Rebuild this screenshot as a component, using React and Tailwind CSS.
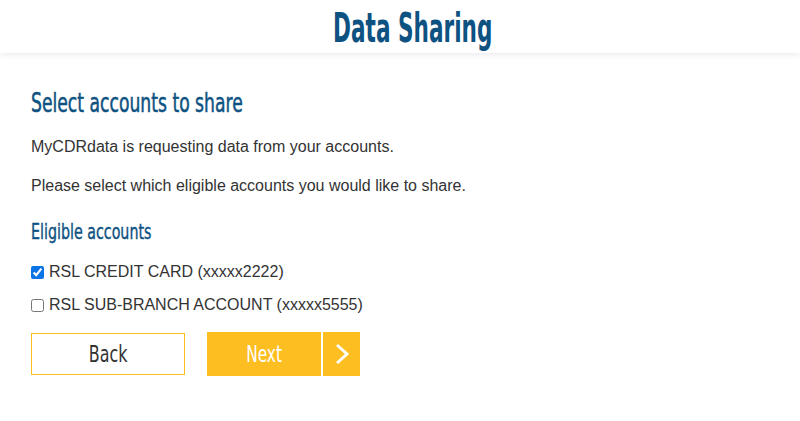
import React, { useState } from 'react';

const ACCOUNTS = [
  { id: 'cc', label: 'RSL CREDIT CARD (xxxxx2222)', checked: true },
  { id: 'sb', label: 'RSL SUB-BRANCH ACCOUNT (xxxxx5555)', checked: false },
];

const condensed = { fontFamily: '"DejaVu Sans Condensed", "Liberation Sans", sans-serif' };

export default function App() {
  const [selected, setSelected] = useState(
    Object.fromEntries(ACCOUNTS.map((a) => [a.id, a.checked]))
  );

  return (
    <div className="min-h-screen bg-white" style={{ fontFamily: '"Liberation Sans", Arial, sans-serif' }}>
      <header className="h-[53px] bg-white shadow-[0_2px_6px_rgba(0,0,0,0.08)] flex items-end justify-center pb-[5px]">
        <h1 className="ml-[26px] text-[40px] leading-none font-bold text-[#0e5282] scale-x-[0.6] whitespace-nowrap" style={condensed}>
          Data Sharing
        </h1>
      </header>

      <main className="px-[31px] pt-[35px]">
        <h2 className="text-[26px] leading-[30px] text-[#0e5282] origin-left scale-x-[0.735] whitespace-nowrap [-webkit-text-stroke:0.5px_#0e5282]" style={condensed}>
          Select accounts to share
        </h2>
        <p className="mt-[20px] text-[16px] leading-[18px] text-[#333]">MyCDRdata is requesting data from your accounts.</p>
        <p className="mt-[21px] text-[16px] leading-[18px] text-[#333]">Please select which eligible accounts you would like to share.</p>

        <h3 className="mt-[24px] text-[22px] leading-[26px] text-[#0e5282] origin-left scale-x-[0.72] whitespace-nowrap [-webkit-text-stroke:0.4px_#0e5282]" style={condensed}>
          Eligible accounts
        </h3>

        <ul className="mt-[17px] space-y-[13px]">
          {ACCOUNTS.map((a) => (
            <li key={a.id}>
              <label className="flex items-center gap-[5px] h-[20px] text-[16px] leading-[20px] text-[#333]">
                <input
                  type="checkbox"
                  checked={selected[a.id]}
                  onChange={(e) => setSelected({ ...selected, [a.id]: e.target.checked })}
                  className="w-[13px] h-[13px] m-0 accent-[#0b74e6]"
                />
                {a.label}
              </label>
            </li>
          ))}
        </ul>

        <div className="mt-[17px] flex items-center gap-[22px]">
          <button
            type="button"
            className="w-[154px] h-[42px] border border-[#fbbe22] bg-white text-[#333]"
          >
            <span className="inline-block text-[23px] scale-x-[0.77]" style={condensed}>Back</span>
          </button>
          <div className="flex gap-[2px]">
            <button type="button" className="w-[114px] h-[44px] bg-[#fdbe22] text-white">
              <span className="inline-block text-[23px] scale-x-[0.74]" style={condensed}>Next</span>
            </button>
            <span className="w-[37px] h-[44px] bg-[#fdbe22] flex items-center justify-center">
              <svg width="14" height="22" viewBox="0 0 14 22" fill="none">
                <path d="M2 2 L12 11 L2 20" stroke="white" strokeWidth="3" />
              </svg>
            </span>
          </div>
        </div>
      </main>
    </div>
  );
}
